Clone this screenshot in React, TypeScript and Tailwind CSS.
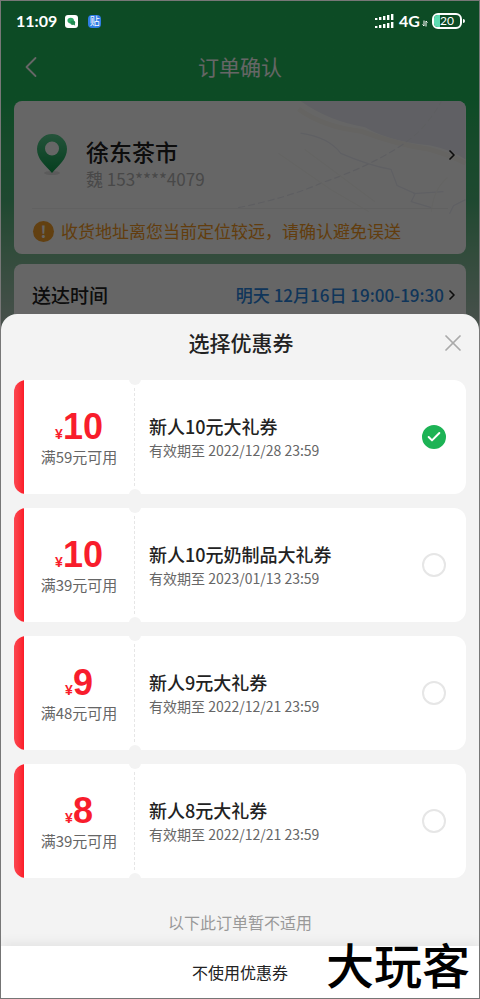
import { useState } from "react";
import { Check, ChevronLeft, ChevronRight, X } from "lucide-react";

const COUPONS = [
  { id: "c1", amount: 10, limit: "满59元可用", name: "新人10元大礼券", expires: "2022/12/28 23:59" },
  { id: "c2", amount: 10, limit: "满39元可用", name: "新人10元奶制品大礼券", expires: "2023/01/13 23:59" },
  { id: "c3", amount: 9, limit: "满48元可用", name: "新人9元大礼券", expires: "2022/12/21 23:59" },
  { id: "c4", amount: 8, limit: "满39元可用", name: "新人8元大礼券", expires: "2022/12/21 23:59" },
];

type Coupon = (typeof COUPONS)[number];

function SignalBars() {
  return (
    <svg width="19" height="15" viewBox="0 0 19 15" fill="#fff">
      {[0, 1, 2, 3, 4].map((i) => (
        <g key={i}>
          <rect x={i * 4} y={4 - i} width="2.4" height={2 + i} />
          <rect x={i * 4} y={12 - i} width="2.4" height={2 + i} />
        </g>
      ))}
    </svg>
  );
}

function StatusBar() {
  return (
    <div className="relative z-10 flex h-10 items-center justify-between pr-[14px] pl-[15px] text-white">
      <div className="flex items-center">
        <span className="font-['Lato',sans-serif] text-base font-bold">11:09</span>
        <svg className="ml-2" width="13" height="13" viewBox="0 0 13 13">
          <rect width="13" height="13" rx="3" fill="#fff" />
          <ellipse cx="5.7" cy="5.6" rx="3.2" ry="2.8" fill="#2da866" />
          <ellipse cx="7.8" cy="7.8" rx="2.5" ry="2.2" fill="#218a52" />
          <path d="M8.6 9.4l1.6 1.4-.3-2z" fill="#218a52" />
        </svg>
        <div className="ml-[10px] flex h-[13px] w-[13px] items-center justify-center rounded-sm bg-[#2f7de4] text-[10px] leading-none">
          贴
        </div>
      </div>
      <div className="flex items-center">
        <SignalBars />
        <span className="ml-[5px] font-['Lato',sans-serif] text-base font-bold">4G</span>
        <svg className="mt-1 ml-0.5" width="6" height="7" viewBox="0 0 6 7" fill="none" stroke="#fff" strokeWidth="1">
          <path d="M2 .5v5.500L.5 4.500M4 6.500V1L5.500 2.500" />
        </svg>
        <div className="ml-1 flex items-center">
          <div className="flex h-4 w-[30px] overflow-hidden rounded-md border-2 border-white">
            <div className="w-[6px] bg-[#5edcb2]" />
            <span className="font-['Lato',sans-serif] text-xs leading-3">20</span>
          </div>
          <div className="ml-px h-1 w-0.5 rounded-r-sm bg-white" />
        </div>
      </div>
    </div>
  );
}

function MapBackdrop() {
  return (
    <svg
      className="absolute inset-y-0 right-0 h-full"
      viewBox="0 0 240 152"
      fill="none"
      preserveAspectRatio="xMaxYMid slice"
    >
      <g transform="translate(14 0)">
        <path d="M62 0Q90 20 126 26Q150 40 190 44Q210 48 226 58V0z" fill="#f0f1fa" />
        <path d="M60 8Q85 26 122 30Q160 44 190 48Q212 54 226 62" stroke="#fcfaf5" strokeWidth="5" />
        <path d="M0 106Q50 96 84 81Q150 58 180 30Q195 14 202 0" stroke="#ebecf3" strokeWidth="1.2" strokeDasharray="7 3" />
        <path
          d="M62 32Q90 36 102 52Q130 64 152 68L158 84L176 92L172 100L192 106M174 92L204 90M226 98L214 104L210 112"
          stroke="#eeeff8"
          strokeWidth="1.2"
        />
        <path d="M40 52L92 88L130 110M66 48L136 100M192 110Q194 88 208 76" stroke="#fafaf7" strokeWidth="1.2" />
      </g>
    </svg>
  );
}

function AddressCard() {
  return (
    <div className="relative overflow-hidden rounded-lg bg-white">
      <MapBackdrop />
      <div className="relative px-[18px] pt-8 pb-[7px]">
        <div className="flex items-center">
          <svg className="mb-4 shrink-0" width="40" height="44" viewBox="0 0 40 44">
            <defs>
              <linearGradient id="pin" x1="0" y1="0" x2="0" y2="1">
                <stop offset="0" stopColor="#5ccf92" />
                <stop offset="1" stopColor="#0c9c4c" />
              </linearGradient>
            </defs>
            <ellipse cx="20" cy="40" rx="8" ry="2" fill="#e3e3e3" />
            <path
              fill="url(#pin)"
              fillRule="evenodd"
              d="M20 1a15 15 0 0 0-15 15c0 10 8 16 15 24c7-8 15-14 15-24a15 15 0 0 0-15-15zM20 8.500a7 7 0 1 1 0 14a7 7 0 0 1 0-14z"
            />
          </svg>
          <div className="ml-[14px] flex-1">
            <div className="text-[23px] leading-8 font-medium text-[#222]">徐东茶市</div>
            <div className="text-[17px] leading-6 text-[#b4b4b4]">魏 153****4079</div>
          </div>
          <ChevronRight size={16} strokeWidth={2.5} className="-mr-3 mb-4 text-[#222]" />
        </div>
        <div className="mt-[15px] flex items-center border-t border-[#f3f3f3] pt-[10px] pb-1">
          <span className="ml-px flex h-[21px] w-[21px] items-center justify-center rounded-full bg-[#f6a02c] text-base leading-none font-bold text-white">
            !
          </span>
          <span className="ml-[7px] text-[17px] leading-6 text-[#f59a23]">
            收货地址离您当前定位较远，请确认避免误送
          </span>
        </div>
      </div>
    </div>
  );
}

function CouponCard({ coupon, checked, onSelect }: { coupon: Coupon; checked: boolean; onSelect: () => void }) {
  return (
    <label htmlFor={coupon.id} className="relative flex h-[114px] cursor-pointer overflow-hidden rounded-xl bg-white">
      <div className="w-[10px] bg-linear-to-r from-[#fb4650] to-[#fb1a28]" />
      <div className="flex w-[110px] flex-col items-center justify-center pt-1">
        <div className="flex items-baseline font-['Liberation_Sans','Noto_Sans_CJK_SC',sans-serif] font-bold text-[#f81d2c]">
          <span className="text-sm">¥</span>
          <span className="text-4xl leading-9">{coupon.amount}</span>
        </div>
        <div className="text-[15px] leading-6 text-[#666]">{coupon.limit}</div>
      </div>
      <div className="my-2 border-l border-dashed border-[#e6e6e6]" />
      <span className="absolute -top-[7px] left-[115px] h-3 w-3 rounded-full bg-[#f3f3f3]" />
      <span className="absolute -bottom-[7px] left-[115px] h-3 w-3 rounded-full bg-[#f3f3f3]" />
      <div className="flex flex-1 items-center justify-between pr-5 pl-[14px]">
        <div className="pt-0.5">
          <div className="text-lg leading-6 font-medium text-[#222]">{coupon.name}</div>
          <div className="text-sm leading-6 text-[#666]">有效期至 {coupon.expires}</div>
        </div>
        <span className="relative h-6 w-6">
          <input
            id={coupon.id}
            type="radio"
            name="coupon"
            checked={checked}
            onChange={onSelect}
            className="block h-6 w-6 appearance-none rounded-full border-2 border-[#e6e6e6] checked:border-[#1db355] checked:bg-[#1db355]"
          />
          {checked && <Check size={16} strokeWidth={3} className="absolute top-1 left-1 text-white" />}
        </span>
      </div>
    </label>
  );
}

export default function App() {
  const [selected, setSelected] = useState("c1");

  return (
    <div className="flex min-h-screen flex-col border border-[#777] bg-[#f3f3f3] font-['Noto_Sans_CJK_SC',sans-serif]">
      <div className="relative bg-linear-to-b from-[#22bc5e] from-30% via-[#4cb579] via-60% to-[#b5c8be] pb-4">
        <div className="absolute inset-0 z-[5] bg-black/60" />
        <StatusBar />
        <div className="flex h-[60px] items-center px-3 pb-2">
          <button type="button" aria-label="返回" className="w-10 text-white">
            <ChevronLeft size={36} strokeWidth={1.2} />
          </button>
          <h1 className="flex-1 text-center text-[21px] text-white">订单确认</h1>
          <div className="w-10" />
        </div>
        <div className="flex flex-col gap-[10px] px-[13px]">
          <AddressCard />
          <div className="flex h-[50px] items-center rounded-t-lg bg-white pt-3 pr-[6px] pl-[18px]">
            <span className="flex-1 text-[19px] font-medium text-[#222]">送达时间</span>
            <span className="text-[17px] font-medium text-[#2a86e0]">明天 12月16日 19:00-19:30</span>
            <ChevronRight size={16} strokeWidth={2.5} className="text-[#222]" />
          </div>
        </div>
      </div>

      <div className="relative z-10 -mt-4 flex flex-1 flex-col rounded-t-2xl bg-[#f3f3f3]">
        <div className="flex h-[66px] items-center px-4 pb-2">
          <div className="w-6" />
          <h2 className="flex-1 text-center text-[21px] font-medium text-[#222]">选择优惠券</h2>
          <button type="button" aria-label="关闭" className="-mr-0.5 w-6 text-[#aaa]">
            <X size={28} strokeWidth={1.5} className="-ml-0.5" />
          </button>
        </div>
        <div className="flex flex-col gap-[14px] px-[13px]">
          {COUPONS.map((c) => (
            <CouponCard key={c.id} coupon={c} checked={selected === c.id} onSelect={() => setSelected(c.id)} />
          ))}
        </div>
        <div className="flex-1 pt-8 text-center text-base text-[#999]">以下此订单暂不适用</div>
        <div className="relative bg-white shadow-[0_-4px_10px_rgba(0,0,0,0.06)]">
          <button type="button" className="block h-[52px] w-full text-base text-[#222]">
            不使用优惠券
          </button>
          <span className="pointer-events-none absolute right-[9px] bottom-0 text-5xl leading-[70px] font-medium text-black">
            大玩客
          </span>
        </div>
      </div>
    </div>
  );
}
